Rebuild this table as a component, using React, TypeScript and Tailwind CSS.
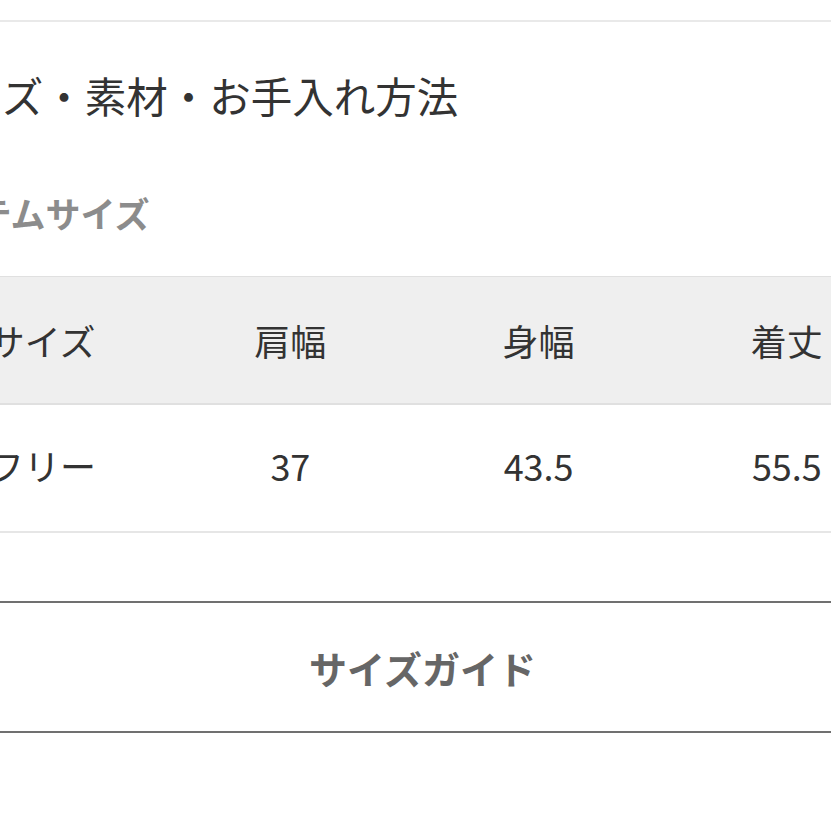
const headers = ["サイズ", "肩幅", "身幅", "着丈"];
const values = ["フリー", "37", "43.5", "55.5"];

export default function App() {
  return (
    <div className="w-[831px] h-[831px] overflow-hidden bg-white font-['Noto_Sans_CJK_JP',sans-serif]">
      {/* page is wider than the crop, shifted left */}
      <div className="-ml-[82px] w-[993px]">
        <div className="h-[22px] border-b-2 border-[#e9e9e9]" />

        <h2 className="mt-[53px] ml-[2px] text-[41.5px] leading-[41px] font-normal text-[#333] whitespace-nowrap">
          サイズ・素材・お手入れ方法
        </h2>

        <h3 className="mt-[79px] -ml-[9px] text-[35px] leading-[35px] font-bold text-[#8c8c8c] whitespace-nowrap">
          アイテムサイズ
        </h3>

        <div className="mt-[46px]">
          <div className="grid grid-cols-4 h-[129px] bg-[#efefef] border-t border-b-2 border-[#e0e0e0]">
            {headers.map((h) => (
              <div key={h} className="flex items-center justify-center text-[36px] text-[#333] whitespace-nowrap">
                {h}
              </div>
            ))}
          </div>
          <div className="grid grid-cols-4 h-[128px] border-b-2 border-[#e6e6e6]">
            {values.map((v) => (
              <div key={v} className="flex items-center justify-center pb-[6px] text-[36px] text-[#333] whitespace-nowrap">
                {v}
              </div>
            ))}
          </div>
        </div>

        <button className="mt-[68px] w-full h-[132px] flex items-center justify-center pl-[16px] border-y-2 border-[#707070] text-[38px] font-bold text-[#666]">
          サイズガイド
        </button>
      </div>
    </div>
  );
}
